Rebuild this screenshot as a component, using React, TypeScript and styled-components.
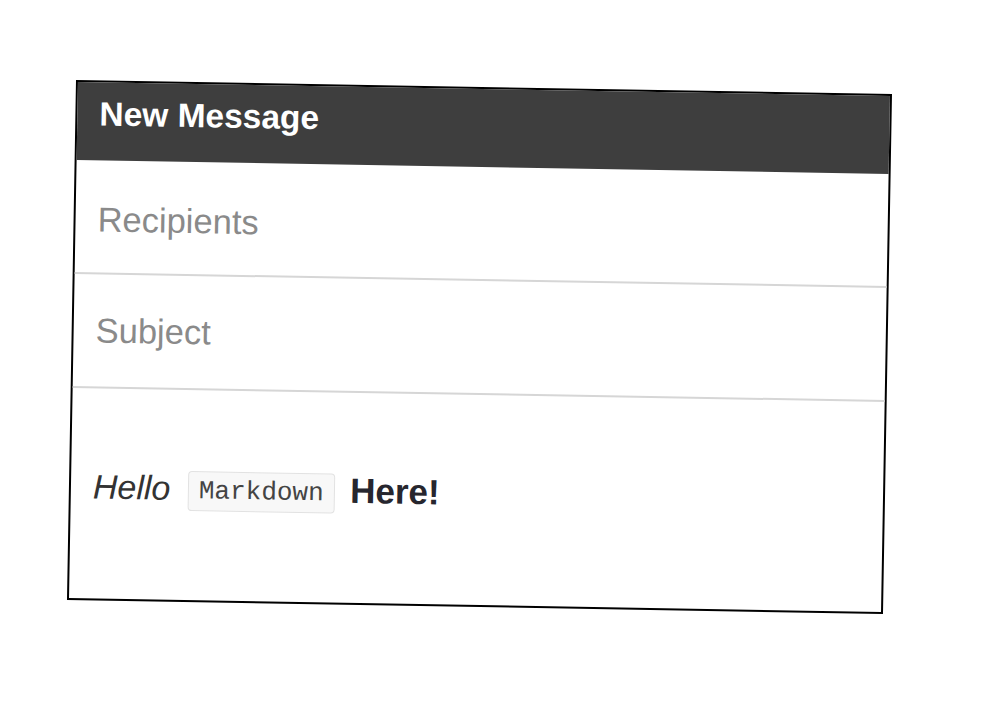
import React from "react";
import styled, { createGlobalStyle } from "styled-components";

const Global = createGlobalStyle`
  html, body { margin: 0; padding: 0; background: #ffffff; }
  body { font-family: "Liberation Sans", Arial, sans-serif; }
`;

const Page = styled.div`
  width: 1000px;
  height: 710px;
  box-sizing: border-box;
  padding: 80px 0 0 76px;
  overflow: hidden;
`;

const Card = styled.div`
  width: 816px;
  height: 520px;
  box-sizing: border-box;
  border: 2px solid #000;
  background: #fff;
  display: flex;
  flex-direction: column;
  transform-origin: 0 0;
  transform: matrix(1, 0.01716, -0.01734, 1, 0, 0);
`;

const Header = styled.div`
  height: 78px;
  box-sizing: border-box;
  padding: 13px 22px 0;
  background: #3e3e3e;
  color: #ffffff;
  font-size: 33.5px;
  font-weight: bold;
  line-height: 38px;
`;

const Field = styled.div<{ $top: number }>`
  height: 114px;
  box-sizing: border-box;
  padding: ${(p) => p.$top}px 22px 0;
  border-bottom: 2px solid #d6d6d6;
  color: #8a8a8a;
  font-size: 34.5px;
  line-height: 38px;
`;

const Body = styled.div`
  flex: 1;
  padding: 78px 22px 0;
  font-size: 34px;
  line-height: 40px;
  color: #2a2a2a;
`;

const Em = styled.em`
  color: #333;
`;

const Code = styled.code`
  display: inline-block;
  margin: 0 6px 0 8px;
  padding: 1px 10px;
  font-family: "Liberation Mono", "DejaVu Sans Mono", monospace;
  font-size: 26px;
  line-height: 36px;
  color: #444;
  background: #f8f8f8;
  border: 1px solid #e2e2e2;
  border-radius: 4px;
  vertical-align: middle;
`;

const Strong = styled.strong`
  color: #26262e;
  font-size: 35px;
`;

export default function App() {
  return (
    <>
      <Global />
      <Page>
        <Card>
          <Header>New Message</Header>
          <Field $top={40}>Recipients</Field>
          <Field $top={37}>Subject</Field>
          <Body>
            <Em>Hello</Em> <Code>Markdown</Code> <Strong>Here!</Strong>
          </Body>
        </Card>
      </Page>
    </>
  );
}
